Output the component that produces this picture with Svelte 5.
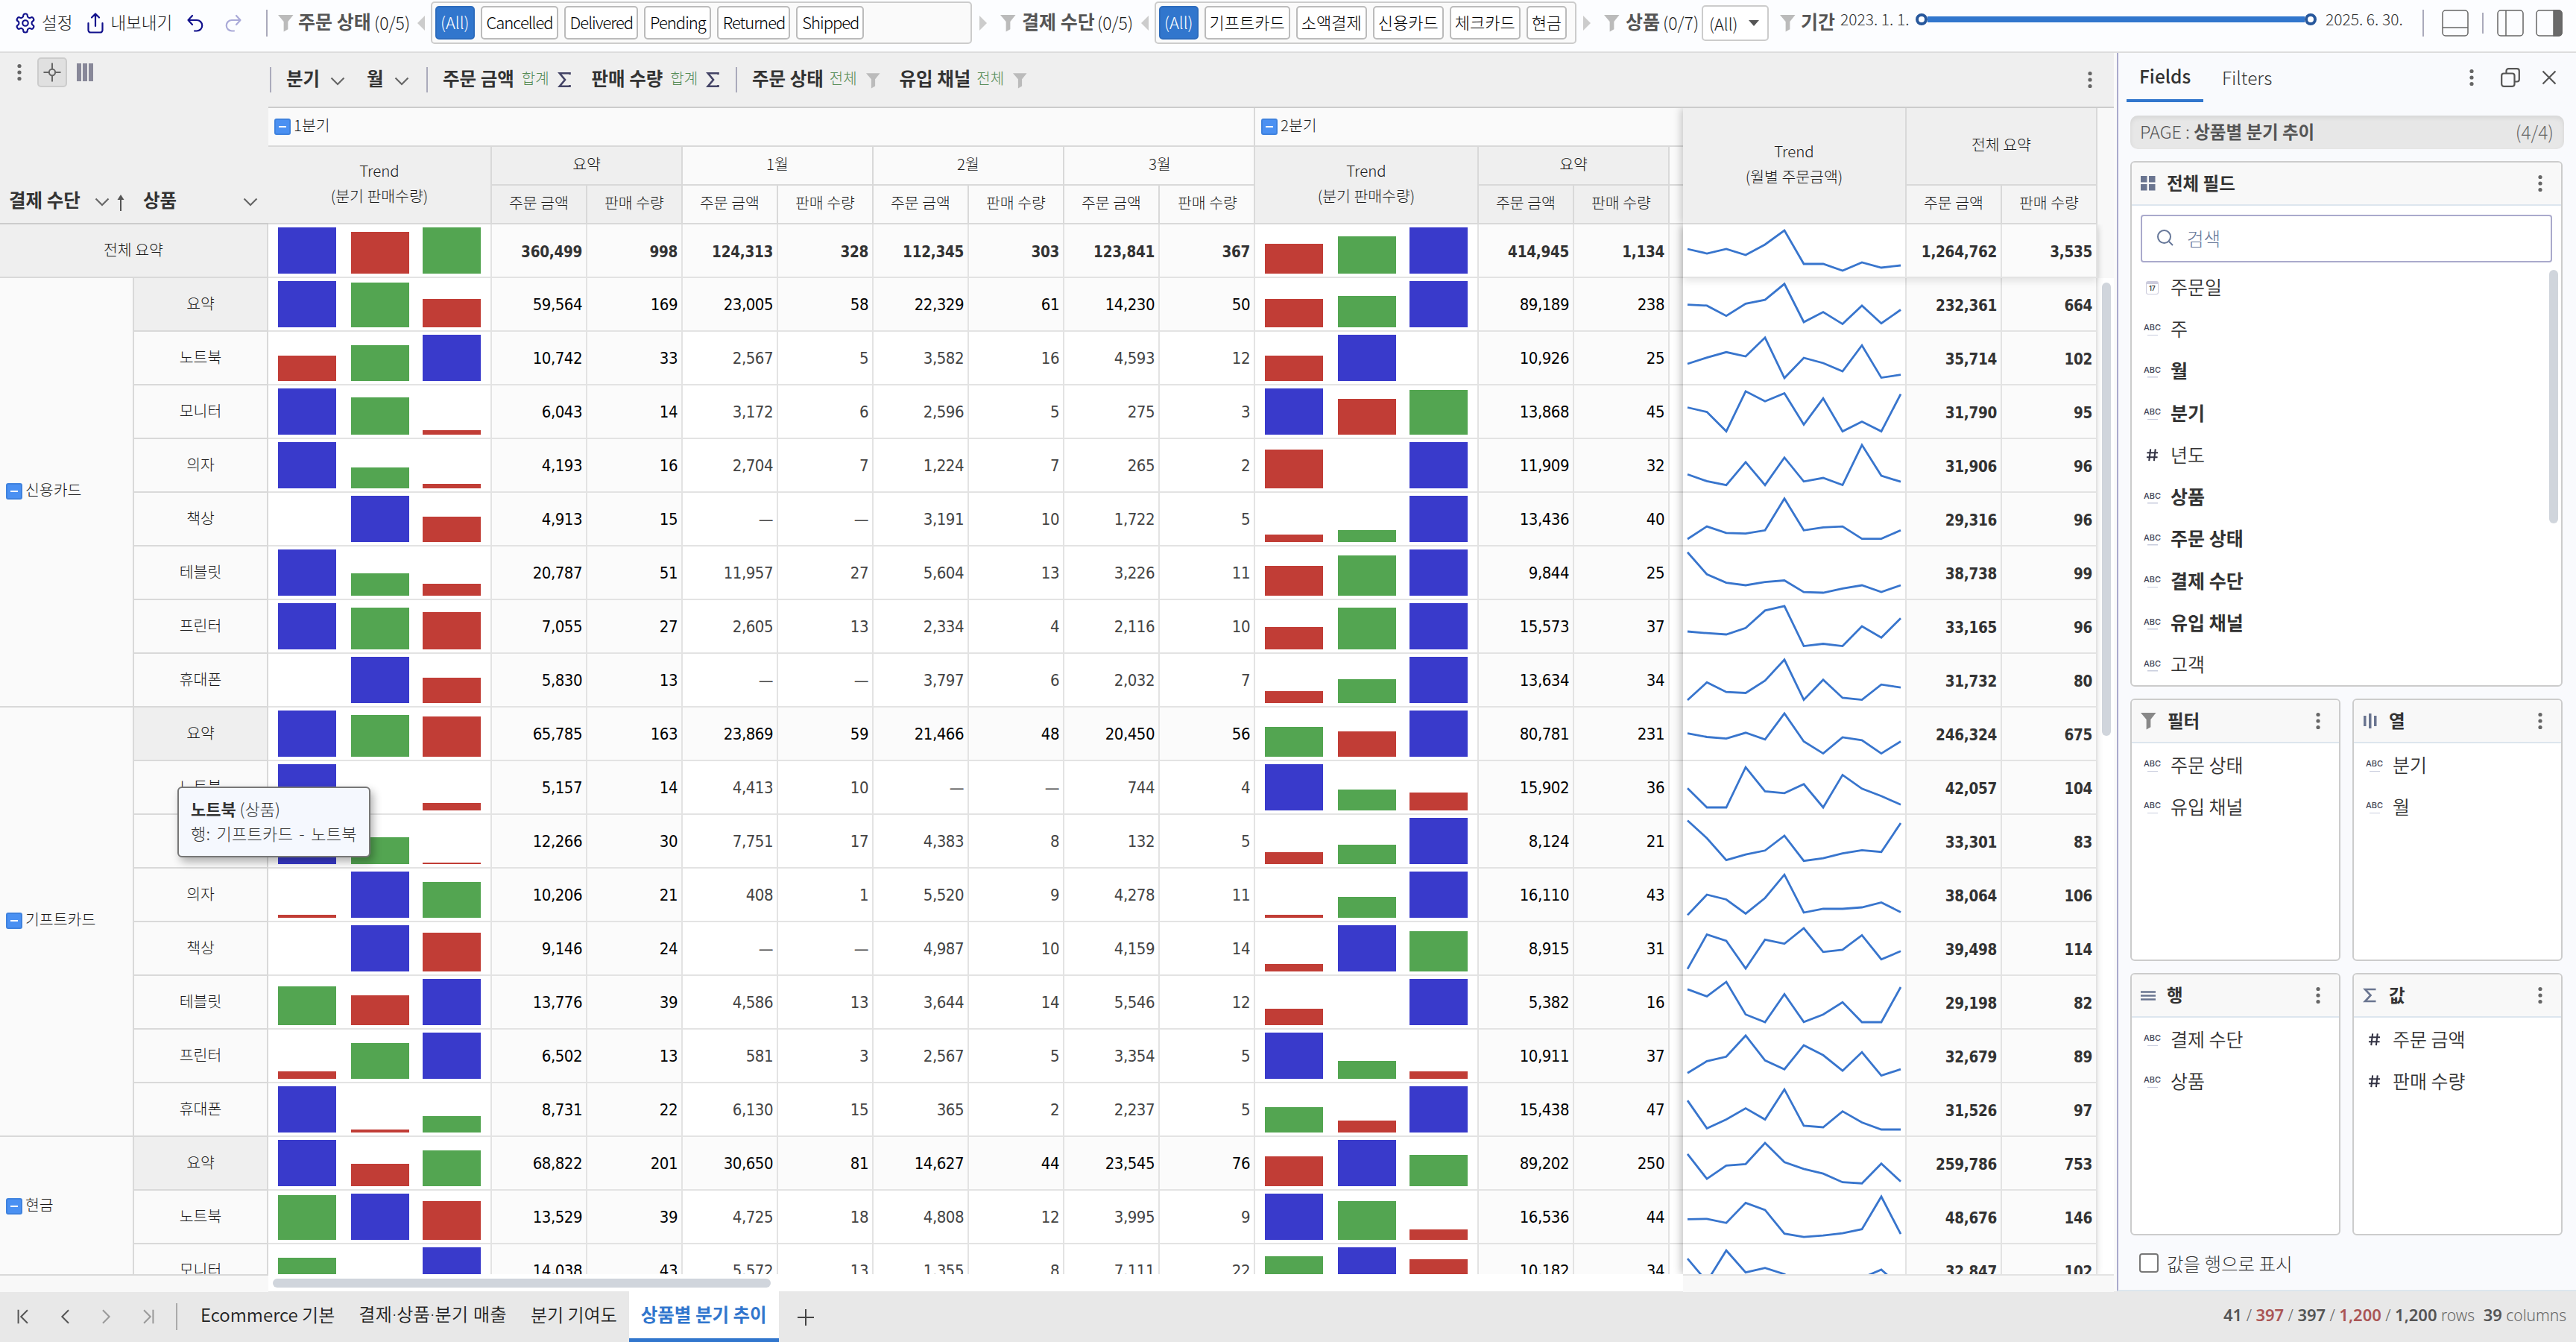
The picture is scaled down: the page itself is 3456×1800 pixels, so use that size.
<script lang="ts">
    type Cell = number | null;

    interface Row {
        name: string;
        summary?: boolean;
        total?: boolean;
        q1: [number, number];
        months: [Cell, Cell][];
        q2: [number, number];
        q2Trend: Cell[];
        line: number[];
        all: [number, number];
    }

    const statuses = ['Cancelled', 'Delivered', 'Pending', 'Returned', 'Shipped'];
    const payments = ['기프트카드', '소액결제', '신용카드', '체크카드', '현금'];

    const grandTotal: Row = {
        name: '전체 요약', total: true, q1: [360499, 998],
        months: [[124313, 328], [112345, 303], [123841, 367]],
        q2: [414945, 1134], q2Trend: [40, 50, 62],
        line: [33, 39, 33, 41, 27, 8, 53, 53, 62, 51, 58, 55], all: [1264762, 3535]
    };

    const groups: { name: string; rows: Row[] }[] = [
        {
            name: '신용카드',
            rows: [
                { name: '요약', summary: true, q1: [59564, 169], months: [[23005, 58], [22329, 61], [14230, 50]], q2: [89189, 238], q2Trend: [38, 42, 62], line: [35.6, 36.9, 50.7, 34.3, 29.1, 7.8, 59, 45.5, 61.6, 36.9, 60.7, 42.5], all: [232361, 664] },
                { name: '노트북', q1: [10742, 33], months: [[2567, 5], [3582, 16], [4593, 12]], q2: [10926, 25], q2Trend: [34, 62, null], line: [43, 34.7, 27.3, 33, 7.8, 62, 35, 42, 53, 18.2, 61.6, 57.7], all: [35714, 102] },
                { name: '모니터', q1: [6043, 14], months: [[3172, 6], [2596, 5], [275, 3]], q2: [13868, 45], q2Trend: [62, 48, 60], line: [29.5, 35.6, 61.6, 7.8, 21.2, 10.4, 52.5, 17.3, 61.6, 48.6, 61.6, 11.7], all: [31790, 95] },
                { name: '의자', q1: [4193, 16], months: [[2704, 7], [1224, 7], [265, 2]], q2: [11909, 32], q2Trend: [52, null, 62], line: [47.3, 56.4, 61.6, 30.8, 61.6, 24.7, 56.8, 52, 61.6, 7.8, 49, 57.2], all: [31906, 96] },
                { name: '책상', q1: [4913, 15], months: [[null, null], [3191, 10], [1722, 5]], q2: [13436, 40], q2Trend: [10, 16, 62], line: [62, 45.1, 53.8, 54.6, 50.3, 7.8, 50.3, 46.4, 45.1, 61.6, 61.6, 50.3], all: [29316, 96] },
                { name: '테블릿', q1: [20787, 51], months: [[11957, 27], [5604, 13], [3226, 11]], q2: [9844, 25], q2Trend: [40, 54, 62], line: [7.8, 37.3, 48.6, 52, 47.7, 45.5, 61.1, 62, 56.4, 52, 61.1, 52], all: [38738, 99] },
                { name: '프린터', q1: [7055, 27], months: [[2605, 13], [2334, 4], [2116, 10]], q2: [15573, 37], q2Trend: [30, 56, 62], line: [42, 44.2, 46, 37.3, 13.9, 7.8, 61.6, 58.5, 61.6, 35.1, 50.3, 24.3], all: [33165, 96] },
                { name: '휴대폰', q1: [5830, 13], months: [[null, null], [3797, 6], [2032, 7]], q2: [13634, 34], q2Trend: [16, 32, 62], line: [62, 38.2, 51.2, 52.5, 36, 7.8, 61.6, 34.7, 59, 61.6, 41.2, 45.1], all: [31732, 80] }
            ]
        },
        {
            name: '기프트카드',
            rows: [
                { name: '요약', summary: true, q1: [65785, 163], months: [[23869, 59], [21466, 48], [20450, 56]], q2: [80781, 231], q2Trend: [40, 34, 62], line: [34.7, 39.5, 41.6, 33.8, 42.9, 8, 45.5, 61.6, 39.9, 43.8, 61.6, 45.5], all: [246324, 675] },
                { name: '노트북', q1: [5157, 14], months: [[4413, 10], [null, null], [744, 4]], q2: [15902, 36], q2Trend: [62, 28, 24], line: [36.3, 62, 62, 8, 40.3, 42.8, 30.8, 62, 18.4, 36.8, 46.8, 58.2], all: [42057, 104] },
                { name: '모니터', q1: [12266, 30], months: [[7751, 17], [4383, 8], [132, 5]], q2: [8124, 21], q2Trend: [16, 26, 62], line: [7.5, 31.3, 60.7, 53.2, 47.8, 27.9, 61.7, 58.2, 51.7, 47.3, 49.7, 11], all: [33301, 83] },
                { name: '의자', q1: [10206, 21], months: [[408, 1], [5520, 9], [4278, 11]], q2: [16110, 43], q2Trend: [4, 28, 62], line: [62.4, 35, 41.5, 60.4, 39.5, 8.2, 59, 54, 54, 52, 45.5, 58.4], all: [38064, 106] },
                { name: '책상', q1: [9146, 24], months: [[null, null], [4987, 10], [4159, 14]], q2: [8915, 31], q2Trend: [10, 62, 54], line: [62.6, 16.4, 24.9, 62, 23.4, 28.8, 8, 39.8, 36.8, 17.4, 49.7, 38.8], all: [39498, 114] },
                { name: '테블릿', q1: [13776, 39], months: [[4586, 13], [3644, 14], [5546, 12]], q2: [5382, 16], q2Trend: [22, null, 62], line: [17.9, 27.4, 8, 51.7, 62, 24.4, 61.7, 51.7, 35.3, 62, 62, 15], all: [29198, 82] },
                { name: '프린터', q1: [6502, 13], months: [[581, 3], [2567, 5], [3354, 5]], q2: [10911, 37], q2Trend: [62, 24, 10], line: [58.2, 42.3, 36.3, 8, 41.3, 53.2, 20.9, 34.3, 55.2, 30.3, 61.7, 53.2], all: [32679, 89] },
                { name: '휴대폰', q1: [8731, 22], months: [[6130, 15], [365, 2], [2237, 5]], q2: [15438, 47], q2Trend: [34, 16, 62], line: [23.1, 60.4, 48.5, 33.6, 48.5, 8.2, 57, 59, 37.6, 52.5, 62, 62], all: [31526, 97] }
            ]
        },
        {
            name: '현금',
            rows: [
                { name: '요약', summary: true, q1: [68822, 201], months: [[30650, 81], [14627, 44], [23545, 76]], q2: [89202, 250], q2Trend: [40, 62, 42], line: [22.9, 56.2, 38.3, 36.3, 8, 33.8, 42.8, 49.2, 60.7, 62.2, 35.8, 59.7], all: [259786, 753] },
                { name: '노트북', q1: [13529, 39], months: [[4725, 18], [4808, 12], [3995, 9]], q2: [16536, 44], q2Trend: [62, 52, 14], line: [38.3, 37.8, 43.3, 16.4, 25.9, 57.7, 62.2, 60.2, 57.2, 51.7, 8, 58.2], all: [48676, 146] },
                { name: '모니터', q1: [14038, 43], months: [[5572, 13], [1355, 8], [7111, 22]], q2: [10182, 34], q2Trend: [50, 62, 46], line: [19.2, 50, 8.2, 37.6, 31.6, 40, 60, 62, 58, 45, 34, 57], all: [32847, 102] }
            ]
        }
    ];

    const rows = [grandTotal, ...groups.flatMap((g) => g.rows)];

    const fields = [
        { type: 'date', name: '주문일' },
        { type: 'abc', name: '주' },
        { type: 'abc', name: '월', used: true },
        { type: 'abc', name: '분기', used: true },
        { type: 'num', name: '년도' },
        { type: 'abc', name: '상품', used: true },
        { type: 'abc', name: '주문 상태', used: true },
        { type: 'abc', name: '결제 수단', used: true },
        { type: 'abc', name: '유입 채널', used: true },
        { type: 'abc', name: '고객' }
    ];

    const zones = [
        { icon: 'filter', name: '필터', type: 'abc', items: ['주문 상태', '유입 채널'] },
        { icon: 'cols', name: '열', type: 'abc', items: ['분기', '월'] },
        { icon: 'rows', name: '행', type: 'abc', items: ['결제 수단', '상품'] },
        { icon: 'sum', name: '값', type: 'num', items: ['주문 금액', '판매 수량'] }
    ];

    const pages = ['Ecommerce 기본', '결제·상품·분기 매출', '분기 기여도', '상품별 분기 추이'];

    function fmt(value: Cell) {
        return value === null ? '—' : value.toLocaleString('en-US');
    }

    // tallest bar fills 62px, heights snap to even pixels
    function bars(values: Cell[]) {
        const present = values.filter((v) => v !== null) as number[];
        const max = Math.max(...present);
        const min = Math.min(...present);
        return values.map((v) => {
            if (v === null) return { h: 0, tone: 'mid' };
            return {
                h: Math.round((v / max) * 31) * 2,
                tone: v === max ? 'max' : v === min ? 'min' : 'mid'
            };
        });
    }

    function points(line: number[]) {
        return line.map((y, i) => `${6 + i * 26},${y}`).join(' ');
    }
</script>

{#snippet funnel(cls)}
    <svg class="funnel {cls}" viewBox="0 0 22 24"><path d="M0 0h21.5L14 9.500V20l-6 3.500V9.500z" /></svg>
{/snippet}

{#snippet dots()}
    <svg class="dots" viewBox="0 0 6 24"><circle cx="3" cy="3.500" r="2.600" /><circle cx="3" cy="12" r="2.600" /><circle cx="3" cy="20.500" r="2.600" /></svg>
{/snippet}

{#snippet chevron()}
    <svg class="chevron" viewBox="0 0 20 12"><path d="M1.500 1.500 10 10l8.500-8.500" /></svg>
{/snippet}

{#snippet sigma()}
    <svg class="sigma" viewBox="0 0 17 20"><path d="M15.500 3V1.300H1.800L9 10l-7.200 8.700h13.700V17" /></svg>
{/snippet}

{#snippet fieldIcon(type)}
    {#if type === 'abc'}
        <span class="abc">ABC</span>
    {:else if type === 'num'}
        <svg class="hash" viewBox="0 0 18 20"><path d="M6.500 1.500 4.500 18M13.500 1.500l-2 16.500M1.500 6.500h15.500M1 13h15.500" /></svg>
    {:else}
        <span class="cal">17</span>
    {/if}
{/snippet}

{#snippet trendBars(values)}
    <div class="cell trend">
        {#each bars(values) as bar}
            <i class="bar {bar.tone}" style="height: {bar.h}px"></i>
        {/each}
    </div>
{/snippet}

<div class="app">
    <header class="toolbar">
        <div class="tools">
            <svg class="gear" viewBox="0 0 24 24"><path d="M12.220 2h-.440a2 2 0 0 0-2 2v.180a2 2 0 0 1-1 1.730l-.430.250a2 2 0 0 1-2 0l-.150-.080a2 2 0 0 0-2.730.730l-.220.380a2 2 0 0 0 .730 2.730l.150.100a2 2 0 0 1 1 1.720v.510a2 2 0 0 1-1 1.740l-.150.090a2 2 0 0 0-.730 2.730l.220.380a2 2 0 0 0 2.730.730l.150-.080a2 2 0 0 1 2 0l.430.250a2 2 0 0 1 1 1.730V20a2 2 0 0 0 2 2h.440a2 2 0 0 0 2-2v-.180a2 2 0 0 1 1-1.730l.430-.250a2 2 0 0 1 2 0l.150.080a2 2 0 0 0 2.730-.730l.220-.390a2 2 0 0 0-.730-2.730l-.150-.080a2 2 0 0 1-1-1.740v-.500a2 2 0 0 1 1-1.740l.150-.090a2 2 0 0 0 .730-2.730l-.220-.380a2 2 0 0 0-2.730-.730l-.150.080a2 2 0 0 1-2 0l-.430-.250a2 2 0 0 1-1-1.730V4a2 2 0 0 0-2-2z" /><circle cx="12" cy="12" r="3" /></svg>
            <span class="tool-label">설정</span>
            <svg class="export" viewBox="0 0 22 28"><path d="M1.500 14v9.500a3 3 0 0 0 3 3h13a3 3 0 0 0 3-3V14M11 18V2M6 6.500 11 1.500l5 5" /></svg>
            <span class="tool-label">내보내기</span>
            <svg class="undo" viewBox="0 0 22 24"><path d="M7 2 1.500 8 7 14M1.500 8H13a7 7 0 0 1 0 14.500h-3" /></svg>
            <svg class="undo redo" viewBox="0 0 22 24"><path d="M15 2l5.500 6-5.500 6M20.500 8H9a7 7 0 0 0 0 14.500h3" /></svg>
        </div>

        <div class="slicer status">
            {@render funnel('')}
            <b>주문 상태</b><span class="count">(0/5)</span>
            <i class="arrow left"></i>
            <div class="chips"><span class="chip on">(All)</span>{#each statuses as s}<span class="chip">{s}</span>{/each}</div>
            <i class="arrow right"></i>
        </div>
        <div class="slicer payment">
            {@render funnel('')}
            <b>결제 수단</b><span class="count">(0/5)</span>
            <i class="arrow left"></i>
            <div class="chips"><span class="chip on">(All)</span>{#each payments as p}<span class="chip">{p}</span>{/each}</div>
            <i class="arrow right"></i>
        </div>
        <div class="slicer product">
            {@render funnel('')}
            <b>상품</b><span class="count">(0/7)</span>
            <div class="select">(All)<i></i></div>
        </div>
        <div class="slicer period">
            {@render funnel('')}
            <b>기간</b><span class="date">2023. 1. 1.</span>
            <div class="range"><i class="knob"></i><i class="track"></i><i class="knob"></i></div>
            <span class="date">2025. 6. 30.</span>
        </div>
        <div class="views">
            <svg class="view" viewBox="0 0 36 36"><rect x="1" y="1" width="34" height="34" rx="4" /><path d="M1 24h34" /></svg>
            <i class="sep"></i>
            <svg class="view" viewBox="0 0 36 36"><rect x="1" y="1" width="34" height="34" rx="4" /><path d="M12 1v34" /></svg>
            <svg class="view" viewBox="0 0 36 36"><rect x="1" y="1" width="34" height="34" rx="4" /><path class="solid" d="M24 1h7a4 4 0 0 1 4 4v26a4 4 0 0 1-4 4h-7z" /></svg>
        </div>
    </header>

    <main>
        <section class="pivot">
            <div class="head">
                <div class="corner">
                    <div class="corner-tools">
                        {@render dots()}
                        <span class="target"><svg viewBox="0 0 26 28"><circle cx="13" cy="14" r="4.500" /><path d="M13 .500v9M13 18.500v9M.500 14H8.500M17.500 14h8" /></svg></span>
                        <span class="stripes"><i></i><i></i><i></i></span>
                    </div>
                    <div class="corner-fields">
                        <b class="pay">결제 수단</b>
                        {@render chevron()}
                        <svg class="sort" viewBox="0 0 10 24"><path d="M5 23V4" /><path class="tip" d="M.500 8 5 1l4.500 7z" /></svg>
                        <b class="prod">상품</b>
                        {@render chevron()}
                    </div>
                </div>
                <div class="head-right">
                    <div class="field-bar">
                        <div class="fgroup g-cols">
                            <b>분기</b>{@render chevron()}
                            <b>월</b>{@render chevron()}
                        </div>
                        <div class="fgroup g-vals">
                            <b>주문 금액</b><em>합계</em>{@render sigma()}
                            <b>판매 수량</b><em>합계</em>{@render sigma()}
                        </div>
                        <div class="fgroup g-filters">
                            <b>주문 상태</b><em>전체</em>{@render funnel('small')}
                            <b>유입 채널</b><em>전체</em>{@render funnel('small')}
                        </div>
                        {@render dots()}
                    </div>
                    <div class="col-heads">
                        <div class="quarters">
                            <div class="quarter">
                                <div class="qname"><i class="toggle"></i>1분기</div>
                                <div class="qbody">
                                    <div class="th shade trend-head">Trend<br />(분기 판매수량)</div>
                                    {#each ['요약', '1월', '2월', '3월'] as m, i}
                                        <div class="pair" class:shade={i === 0}>
                                            <div class="th">{m}</div>
                                            <div class="sub"><div class="th">주문 금액</div><div class="th">판매 수량</div></div>
                                        </div>
                                    {/each}
                                </div>
                            </div>
                            <div class="quarter">
                                <div class="qname"><i class="toggle"></i>2분기</div>
                                <div class="qbody">
                                    <div class="th shade trend-head">Trend<br />(분기 판매수량)</div>
                                    <div class="pair shade">
                                        <div class="th">요약</div>
                                        <div class="sub"><div class="th">주문 금액</div><div class="th">판매 수량</div></div>
                                    </div>
                                    <div class="pair"><div class="th"></div><div class="sub"><div class="th"></div></div></div>
                                </div>
                            </div>
                        </div>
                        <div class="pane-head">
                            <div class="th shade pane-trend">Trend<br />(월별 주문금액)</div>
                            <div class="pair total-pair">
                                <div class="th shade">전체 요약</div>
                                <div class="sub"><div class="th">주문 금액</div><div class="th">판매 수량</div></div>
                            </div>
                        </div>
                        <div class="gutter"></div>
                    </div>
                </div>
            </div>

            <div class="body">
                <div class="row-heads">
                    <div class="rh total-head">전체 요약</div>
                    {#each groups as g}
                        <div class="group">
                            <div class="gname"><i class="toggle"></i><span>{g.name}</span></div>
                            <div class="gitems">
                                {#each g.rows as r}
                                    <div class="rh" class:shade={r.summary}>{r.name}</div>
                                {/each}
                            </div>
                        </div>
                    {/each}
                </div>
                <div class="cells">
                    {#each rows as r}
                        <div class="row" class:summary={r.summary} class:total={r.total}>
                            {@render trendBars(r.months.map((m) => m[0]))}
                            <div class="cell sum">{fmt(r.q1[0])}</div>
                            <div class="cell sum">{fmt(r.q1[1])}</div>
                            {#each r.months as m}
                                <div class="cell">{fmt(m[0])}</div>
                                <div class="cell">{fmt(m[1])}</div>
                            {/each}
                            {@render trendBars(r.q2Trend)}
                            <div class="cell sum">{fmt(r.q2[0])}</div>
                            <div class="cell sum">{fmt(r.q2[1])}</div>
                            <div class="cell"></div>
                        </div>
                    {/each}
                </div>
                <div class="pane">
                    {#each rows as r}
                        <div class="row" class:total={r.total}>
                            <div class="cell spark"><svg viewBox="0 0 298 70"><polyline points={points(r.line)} /></svg></div>
                            <div class="cell sum">{fmt(r.all[0])}</div>
                            <div class="cell sum">{fmt(r.all[1])}</div>
                        </div>
                    {/each}
                </div>
                <div class="vscroll"><i></i></div>
            </div>

            <div class="foot">
                <div class="foot-left"></div>
                <div class="hscroll"><i></i></div>
                <div class="foot-right"></div>
            </div>

            <div class="tooltip"><div><b>노트북</b> (상품)</div><div class="path">행: 기프트카드 - 노트북</div></div>
        </section>

        <aside class="panel">
            <div class="panel-tabs">
                <span class="ptab on">Fields</span>
                <span class="ptab">Filters</span>
                {@render dots()}
                <svg class="copy" viewBox="0 0 26 26"><rect x="1.200" y="7.500" width="17.300" height="17.300" rx="3" /><path d="M7.500 7.500V4.200a3 3 0 0 1 3-3h11.300a3 3 0 0 1 3 3v11.300a3 3 0 0 1-3 3h-3.300" /></svg>
                <svg class="close" viewBox="0 0 20 20"><path d="M1.500 1.500l17 17M18.500 1.500l-17 17" /></svg>
            </div>
            <div class="page-bar"><span>PAGE : <b>상품별 분기 추이</b></span><span class="pcount">(4/4)</span></div>
            <div class="box all-fields">
                <div class="box-head">
                    <svg class="zicon" viewBox="0 0 20 20"><path class="fill" d="M0 0h8.500v8.500H0zM11 0h8.500v8.500H11zM0 11h8.500v8.500H0zM11 11h8.500v8.500H11z" /></svg>
                    <b>전체 필드</b>
                    {@render dots()}
                </div>
                <div class="search">
                    <svg viewBox="0 0 24 24"><circle cx="10.500" cy="10.500" r="8.500" /><path d="M17 17l5 5" /></svg>
                    검색
                </div>
                <div class="field-list">
                    <div class="items">
                        {#each fields as f}
                            <div class="item" class:used={f.used}>{@render fieldIcon(f.type)}<span>{f.name}</span></div>
                        {/each}
                    </div>
                    <i class="list-thumb"></i>
                </div>
            </div>
            <div class="zones">
                {#each zones as z}
                    <div class="box">
                        <div class="box-head">
                            {#if z.icon === 'filter'}
                                {@render funnel('dark')}
                            {:else if z.icon === 'cols'}
                                <svg class="zicon" viewBox="0 0 20 20"><path class="fill" d="M1 3h3.500v14H1zM8 0h3.500v20H8zM15 3h3.500v14H15z" /></svg>
                            {:else if z.icon === 'rows'}
                                <svg class="zicon" viewBox="0 0 22 20"><path d="M0 5h22M0 10.500h22M0 16h22" /></svg>
                            {:else}
                                <svg class="zicon" viewBox="0 0 18 20"><path d="M16.500 2H2l7.500 8L2 18h14.500" /></svg>
                            {/if}
                            <b>{z.name}</b>
                            {@render dots()}
                        </div>
                        <div class="items">
                            {#each z.items as item}
                                <div class="item">{@render fieldIcon(z.type)}<span>{item}</span></div>
                            {/each}
                        </div>
                    </div>
                {/each}
            </div>
            <div class="check"><i></i>값을 행으로 표시</div>
        </aside>
    </main>

    <footer class="pages">
        <div class="nav">
            <svg viewBox="0 0 18 24"><path d="M2 2v20M15.500 2.500 6 12l9.500 9.500" /></svg>
            <svg viewBox="0 0 18 24"><path d="M14.500 2.500 5 12l9.500 9.500" /></svg>
            <svg class="off" viewBox="0 0 18 24"><path d="M3.500 2.500 13 12l-9.500 9.500" /></svg>
            <svg class="off" viewBox="0 0 18 24"><path d="M2.500 2.500 12 12l-9.500 9.500M16 2v20" /></svg>
        </div>
        <div class="tabs">
            {#each pages as p, i}
                <span class="tab" class:on={i === 3}>{p}</span>
            {/each}
            <svg class="plus" viewBox="0 0 22 22"><path d="M11 0v22M0 11h22" /></svg>
        </div>
        <div class="stats"><b>41</b> / <b class="red">397</b> / <b>397</b> / <b class="red">1,200</b> / <b>1,200</b> <span>rows</span> <b class="cnum">39</b> <span>columns</span></div>
    </footer>
</div>

<style>
    :global(body) {
        background: #fff;
    }

    .app {
        width: 3456px;
        height: 1800px;
        display: flex;
        flex-direction: column;
        overflow: hidden;
        font-family: "Noto Sans CJK KR", "Noto Sans", sans-serif;
        font-size: 22px;
        font-weight: 300;
        color: #1a1a1a;
        white-space: nowrap;
    }

    .app * {
        box-sizing: border-box;
    }

    svg {
        display: block;
        flex: none;
        fill: none;
        overflow: visible;
    }

    b {
        font-weight: 700;
    }

    em,
    i {
        font-style: normal;
        flex: none;
    }

    .funnel {
        width: 21px;
        height: 23px;
        fill: #bbb;
    }

    .funnel.small {
        width: 19px;
        height: 21px;
    }

    .funnel.dark {
        fill: #888;
    }

    .dots {
        width: 6px;
        height: 24px;
        fill: #666;
    }

    .chevron {
        width: 20px;
        height: 12px;
        stroke: #666;
        stroke-width: 2.2;
    }

    .sigma {
        width: 17px;
        height: 20px;
        stroke: #446;
        stroke-width: 2.6;
    }

    /* toolbar */
    .toolbar {
        height: 71px;
        flex: none;
        display: flex;
        align-items: flex-start;
        background: #fcfdff;
        border-bottom: 2px solid #ddd;
    }

    .tools {
        width: 359px;
        height: 36px;
        margin: 13px 14px 0 0;
        padding-left: 19px;
        display: flex;
        align-items: center;
        border-right: 2px solid #aab;
    }

    .gear {
        width: 30px;
        height: 30px;
        stroke: #11118c;
        stroke-width: 1.7;
    }

    .tool-label {
        margin: -4px 20px 0 7px;
        font-size: 22.5px;
    }

    .export,
    .undo {
        width: 22px;
        height: 28px;
        stroke: #11118c;
        stroke-width: 2.2;
        stroke-linecap: round;
        stroke-linejoin: round;
    }

    .export + .tool-label {
        margin-left: 9px;
    }

    .undo {
        height: 24px;
    }

    .redo {
        margin-left: 29px;
        stroke: #aaaad8;
    }

    .slicer {
        display: grid;
        align-items: center;
        height: 61px;
    }

    .slicer b {
        font-size: 25px;
        color: #555;
        margin-top: -6px;
    }

    .slicer .funnel {
        margin-top: 2px;
    }

    .count {
        font-size: 23px;
        margin-top: -2px;
    }

    .status {
        width: 969px;
        grid-template-columns: 27px 102px 58px 18px 736px 28px;
    }

    .payment {
        width: 810px;
        grid-template-columns: 29px 101px 59px 18px 575px 28px;
    }

    .product {
        width: 236px;
        grid-template-columns: 29px 50px 52px 90px;
    }

    .period {
        width: 862px;
        grid-template-columns: 28px 53px 101px 550px auto;
    }

    .arrow {
        width: 0;
        height: 0;
        border: 10px solid transparent;
    }

    .arrow.left {
        border-left: 0;
        border-right-color: #ccc;
    }

    .arrow.right {
        border-right: 0;
        border-left-color: #ccc;
    }

    .chips {
        width: 726px;
        height: 57px;
        padding: 4px;
        display: flex;
        gap: 8px;
        background: #fafafa;
        border: 2px solid #ccc;
        border-radius: 5px;
    }

    .payment .chips {
        width: 566px;
    }

    .chip {
        height: 45px;
        padding: 0 5px;
        line-height: 38px;
        color: #000;
        background: #fff;
        border: 2px solid #bbb;
        border-radius: 5px;
        font-size: 22px;
    }

    .status .chip:not(.on) {
        letter-spacing: -1px;
        padding-left: 6px;
    }

    .chip.on {
        background: #3176cd;
        border-color: #2d6cbd;
        color: #fff;
    }

    .select {
        width: 90px;
        height: 48px;
        padding: 0 11px 0 8px;
        display: flex;
        align-items: center;
        justify-content: space-between;
        background: #fff;
        border: 2px solid #ccc;
        border-radius: 5px;
    }

    .select i {
        border: 7px solid transparent;
        border-top: 8px solid #555;
        border-bottom: 0;
    }

    .date {
        font-size: 21px;
        margin-top: -12px;
        color: #333;
    }

    .range {
        width: 538px;
        display: flex;
        align-items: center;
        margin-top: -9px;
    }

    .knob {
        width: 16px;
        height: 16px;
        border: 4px solid #28589c;
        border-radius: 50%;
        background: #fff;
    }

    .track {
        flex: 1;
        height: 8px;
        background: #3176cd;
    }

    .views {
        height: 36px;
        margin-top: 13px;
        padding-left: 24px;
        display: flex;
        align-items: center;
        gap: 18px;
        border-left: 2px solid #aab;
    }

    .view {
        width: 36px;
        height: 36px;
        stroke: #666;
        stroke-width: 1.5;
    }

    .view:last-child {
        margin-left: -2px;
    }

    .view .solid {
        fill: #6a6a6a;
    }

    .sep {
        width: 2px;
        height: 28px;
        background: #aab;
    }

    main {
        height: 1661px;
        flex: none;
        display: flex;
        background: #fafafa;
    }

    /* pivot grid */
    .pivot {
        width: 2836px;
        position: relative;
        display: flex;
        flex-direction: column;
        background: #fff;
    }

    .head {
        height: 230px;
        flex: none;
        display: flex;
        background: #efefef;
    }

    .corner {
        width: 360px;
        display: flex;
        flex-direction: column;
        justify-content: space-between;
        border-bottom: 2px solid #ccc;
        padding-top: 6px;
    }

    .corner-tools {
        display: flex;
        align-items: center;
        padding-left: 23px;
    }

    .target {
        width: 40px;
        height: 40px;
        margin: 0 13px 0 21px;
        padding: 4px 6px;
        background: #e0e0e0;
        border: 2px solid #ccc;
        border-radius: 5px;
    }

    .target svg {
        width: 24px;
        height: 28px;
        stroke: #666;
        stroke-width: 2.2;
    }

    .stripes {
        display: flex;
        gap: 2px;
    }

    .stripes i {
        width: 6px;
        height: 24px;
        background: #889;
    }

    .corner-fields {
        display: flex;
        align-items: center;
        height: 52px;
        margin-bottom: 6px;
        padding-left: 12px;
        font-size: 24.5px;
        color: #333;
    }

    .corner-fields .chevron {
        margin-top: 8px;
    }

    .pay {
        width: 115px;
    }

    .sort {
        width: 10px;
        height: 24px;
        margin: 9px 25px 0 10px;
        stroke: #555;
        stroke-width: 2;
    }

    .sort .tip {
        fill: #555;
        stroke: none;
    }

    .prod {
        width: 134px;
    }

    .head-right {
        width: 2476px;
        display: flex;
        flex-direction: column;
    }

    .field-bar {
        height: 74px;
        display: flex;
        align-items: center;
        border-bottom: 2px solid #ccc;
    }

    .fgroup {
        height: 34px;
        margin-top: -1px;
        display: flex;
        align-items: center;
        border-left: 2px solid #aab;
        padding-left: 20px;
        font-size: 24.5px;
        color: #333;
    }

    .fgroup b {
        margin-top: -5px;
    }

    .fgroup em {
        margin: -4px 12px 0 8px;
        font-size: 20px;
        color: #558b55;
    }

    .g-cols {
        width: 210px;
        margin-left: 2px;
    }

    .g-cols .chevron {
        margin: 4px 29px 0 14px;
    }

    .g-vals {
        width: 415px;
    }

    .g-vals em {
        margin-left: 10px;
    }

    .g-vals .sigma {
        margin-right: 28px;
    }

    .g-filters {
        width: 1814px;
    }

    .g-filters .funnel {
        margin-right: 26px;
        margin-top: 3px;
    }

    .col-heads {
        height: 156px;
        display: flex;
    }

    .quarters {
        width: 1898px;
        display: flex;
        overflow: hidden;
        font-size: 20.5px;
    }

    .quarter {
        width: 1324px;
        flex: none;
        background: #fafafa;
        border-right: 2px solid #d9d9d9;
        border-left: 2px solid #ccc;
        margin-left: -2px;
    }

    .quarter + .quarter {
        border-left: 0;
        margin-left: 0;
    }

    .quarter:first-child {
        width: 1326px;
    }

    .qname {
        height: 52px;
        display: flex;
        align-items: center;
        gap: 4px;
        padding: 0 0 6px 8px;
        border-bottom: 2px solid #d9d9d9;
    }

    .toggle {
        width: 22px;
        height: 22px;
        background: linear-gradient(#fff, #fff) center / 10px 2px no-repeat #4a90f2;
        border: 2px solid #3f82de;
        border-radius: 3px;
        position: relative;
        top: 3px;
    }

    .qbody {
        display: flex;
    }

    .th {
        display: flex;
        align-items: center;
        justify-content: center;
        text-align: center;
        border-right: 2px solid #d9d9d9;
        border-bottom: 2px solid #d9d9d9;
        padding-bottom: 6px;
        line-height: 34px;
        font-size: 20.5px;
    }

    .shade {
        background: #efefef;
    }

    .trend-head {
        width: 300px;
        height: 104px;
        flex: none;
    }

    .pair {
        width: 256px;
        flex: none;
    }

    .pair .th {
        height: 52px;
    }

    .sub {
        display: flex;
    }

    .sub .th {
        width: 128px;
    }

    .quarter:first-child .pair:last-child .th,
    .quarter:first-child .pair:last-child .sub .th:last-child {
        border-right: 0;
    }

    .quarter:first-child .pair:last-child .sub .th:first-child {
        border-right: 2px solid #d9d9d9;
    }

    .pane-head {
        width: 556px;
        display: flex;
        box-shadow: -3px 0 10px rgba(0, 0, 0, 0.2);
        clip-path: inset(0 0 0 -20px);
    }

    .pane-trend {
        width: 300px;
    }

    .total-pair .th {
        height: 104px;
    }

    .total-pair .sub .th {
        height: 52px;
        background: #f4f4f4;
    }

    .gutter {
        flex: 1;
        background: #f8f8f8;
    }

    .body {
        height: 1408px;
        flex: none;
        display: flex;
        overflow: hidden;
    }

    .row-heads {
        width: 360px;
        flex: none;
        background: #fafafa;
        font-size: 20.5px;
        display: flex;
        flex-direction: column;
    }

    .rh {
        height: 72px;
        flex: none;
        display: flex;
        align-items: center;
        justify-content: center;
        padding-bottom: 5px;
        border-right: 2px solid #d9d9d9;
        border-bottom: 2px solid #d9d9d9;
    }

    .total-head {
        background: #efefef;
    }

    .group {
        display: flex;
        flex: none;
    }

    .group:last-child {
        height: 184px;
        overflow: hidden;
    }

    .gname {
        width: 180px;
        display: flex;
        align-items: center;
        gap: 4px;
        padding: 0 0 8px 8px;
        border-right: 2px solid #d9d9d9;
        border-bottom: 2px solid #d9d9d9;
    }

    .group:last-child .gname {
        padding-bottom: 5px;
        border-bottom: 0;
    }

    .gitems {
        width: 180px;
    }

    .cells {
        width: 1898px;
        flex: none;
        overflow: hidden;
    }

    .row {
        height: 72px;
        display: flex;
    }

    .cell {
        width: 128px;
        height: 72px;
        flex: none;
        display: flex;
        align-items: center;
        justify-content: flex-end;
        padding: 1px 5px 0 0;
        border-right: 2px solid #e3e3e3;
        border-bottom: 2px solid #e3e3e3;
        font-family: "DejaVu Sans Condensed", "DejaVu Sans", sans-serif;
        font-stretch: condensed;
        font-weight: 400;
        font-size: 22px;
        letter-spacing: -0.5px;
        color: #444;
    }

    .sum,
    .summary .cell,
    .total .cell {
        background: #fbfbfb;
        color: #000;
    }

    .total .cell,
    .pane .sum {
        padding-top: 3px;
        font-weight: 700;
        font-size: 20.5px;
        letter-spacing: -0.3px;
        color: #333;
    }

    .row .trend,
    .row .spark {
        width: 300px;
        background: #fff;
    }

    .row .trend {
        align-items: flex-end;
        justify-content: flex-start;
        padding: 0 0 4px 13px;
    }

    .bar {
        width: 78px;
        margin-right: 20px;
    }

    .bar + .bar {
        margin-right: 18px;
    }

    .max {
        background: #393acb;
    }

    .mid {
        background: #53a551;
    }

    .min {
        background: #c13d36;
    }

    .pane {
        width: 556px;
        flex: none;
        z-index: 1;
        background: #fff;
        box-shadow: -3px 0 10px rgba(0, 0, 0, 0.24);
    }

    .pane .total {
        position: relative;
        box-shadow: 0 4px 10px rgba(0, 0, 0, 0.1);
    }

    .pane .spark {
        padding: 0;
    }

    .spark svg {
        width: 298px;
        height: 70px;
        stroke: #3875cd;
        stroke-width: 2.8;
    }

    .vscroll {
        flex: 1;
        padding: 78px 0 0 6px;
        background: linear-gradient(#f8f8f8 72px, #fff 72px);
    }

    .vscroll i {
        display: block;
        width: 12px;
        height: 608px;
        border-radius: 6px;
        background: #d0d5dc;
    }

    .foot {
        flex: 1;
        display: flex;
    }

    .foot-left {
        width: 360px;
        background: #f8f8f8;
        border-top: 2px solid #d9d9d9;
    }

    .hscroll {
        width: 1898px;
        padding: 6px;
    }

    .hscroll i {
        display: block;
        width: 668px;
        height: 12px;
        border-radius: 6px;
        background: #d0d5dc;
    }

    .foot-right {
        flex: 1;
        background: #f8f8f8;
        border-top: 2px solid #e3e3e3;
    }

    .tooltip {
        position: absolute;
        left: 238px;
        top: 984px;
        width: 259px;
        height: 95px;
        z-index: 2;
        padding: 11px 16px;
        line-height: 33px;
        font-size: 22px;
        color: #333;
        background: #f5f8fe;
        border: 2px solid #777;
        border-radius: 6px;
        box-shadow: 4px 6px 12px rgba(0, 0, 0, 0.3);
    }

    .tooltip .path {
        word-spacing: 3px;
        letter-spacing: 0.3px;
    }

    /* side panel */
    .panel {
        width: 616px;
        margin-left: 4px;
        padding: 0 18px 0 16px;
        background: #f9fafd;
        border-left: 2px solid #aac;
        border-bottom: 2px solid #dde6ee;
        color: #333;
    }

    .panel-tabs {
        height: 66px;
        margin-left: -5px;
        display: flex;
        align-items: center;
    }

    .ptab {
        width: 103px;
        height: 66px;
        padding-left: 17px;
        line-height: 66px;
        font-size: 24.5px;
    }

    .ptab.on {
        font-weight: 500;
        line-height: 62px;
        border-bottom: 4px solid #3176cd;
    }

    .ptab + .ptab {
        width: 357px;
        padding-left: 25px;
    }

    .panel-tabs .dots {
        margin-right: 36px;
    }

    .copy {
        width: 26px;
        height: 26px;
        margin-right: 29px;
        stroke: #555;
        stroke-width: 2.2;
    }

    .close {
        width: 20px;
        height: 20px;
        stroke: #555;
        stroke-width: 2.2;
    }

    .page-bar {
        width: 582px;
        height: 45px;
        margin-top: 18px;
        padding: 0 14px 3px 13px;
        display: flex;
        align-items: center;
        justify-content: space-between;
        font-size: 23.5px;
        color: #555;
        background: #e7e7e7;
        border-radius: 10px;
        box-shadow: inset 0 3px 6px rgba(0, 0, 0, 0.08);
    }

    .pcount {
        color: #666;
        font-size: 24.5px;
    }

    .box {
        background: #fff;
        border: 2px solid #ccc;
        border-radius: 6px;
        overflow: hidden;
    }

    .all-fields {
        width: 580px;
        height: 705px;
        margin-top: 16px;
    }

    .box-head {
        height: 58px;
        display: flex;
        align-items: center;
        padding: 0 25px 0 12px;
        background: #f8f8f8;
        border-bottom: 2px solid #dde6ee;
        font-size: 23.5px;
    }

    .box-head b {
        flex: 1;
        padding: 0 0 3px 15px;
    }

    .zicon {
        width: 20px;
        height: 20px;
        stroke: #6a7590;
        stroke-width: 2.6;
    }

    .zicon .fill {
        fill: #6a7590;
        stroke: none;
    }

    .search {
        width: 552px;
        height: 64px;
        margin: 12px;
        padding: 0 0 2px 19px;
        display: flex;
        align-items: center;
        gap: 17px;
        font-size: 24.5px;
        color: #667799;
        border: 2px solid #aac;
        border-radius: 4px;
    }

    .search svg {
        width: 24px;
        height: 24px;
        stroke: #667799;
        stroke-width: 2;
    }

    .field-list {
        display: flex;
        justify-content: space-between;
        margin-top: -7px;
    }

    .item {
        height: 56.300px;
        display: flex;
        align-items: center;
        padding: 1px 0 0 14px;
        font-size: 25px;
        font-weight: 350;
    }

    .item span:last-child {
        padding: 0 0 4px 11px;
    }

    .item.used {
        font-weight: 700;
    }

    .item .abc {
        width: 27px;
        height: 17px;
        font: 500 11px/13px Inter, sans-serif;
        text-align: center;
        color: #445;
        background: linear-gradient(#c8ccdd, #c8ccdd) center bottom / 14px 1.500px no-repeat;
    }

    .hash {
        width: 17px;
        height: 19px;
        margin: 0 5px;
        stroke: #334;
        stroke-width: 2.2;
    }

    .item .cal {
        width: 17px;
        height: 18px;
        margin: 0 5px;
        font: 600 8.500px/12px Inter, sans-serif;
        text-align: center;
        border: 1px solid #ccd;
        border-top: 4px solid #ccd;
        border-radius: 3px;
    }

    .list-thumb {
        width: 12px;
        height: 340px;
        margin: 5px 4px 0 0;
        border-radius: 6px;
        background: #d0d5dc;
    }

    .zones {
        display: grid;
        grid-template-columns: 282px 282px;
        gap: 16px;
        margin-top: 16px;
    }

    .zones .box {
        height: 352px;
    }

    .zones .items {
        padding-top: 1px;
    }

    .check {
        display: flex;
        align-items: center;
        gap: 11px;
        height: 72px;
        padding: 2px 0 0 12px;
        font-size: 24.5px;
    }

    .check i {
        width: 26px;
        height: 26px;
        background: #fff;
        border: 2px solid #777;
        border-radius: 4px;
    }

    /* page tabs */
    .pages {
        height: 68px;
        display: flex;
        background: #e8e8e8;
    }

    .nav {
        width: 238px;
        height: 36px;
        margin-top: 16px;
        padding-left: 22px;
        display: flex;
        align-items: center;
        gap: 38px;
        border-right: 2px solid #aaa;
        stroke: #555;
        stroke-width: 2.2;
    }

    .nav svg {
        width: 18px;
        height: 22px;
    }

    .nav .off {
        stroke: #999;
    }

    .tabs {
        width: 2745px;
        padding-left: 15px;
        display: flex;
    }

    .tab {
        padding: 0 16px;
        line-height: 62px;
        font-size: 24px;
        font-weight: 350;
        color: #222;
    }

    .tab:nth-child(2) {
        font-family: "Open Sans", "Noto Sans CJK KR", sans-serif;
        letter-spacing: 0.4px;
    }

    .tab.on {
        background: #fff;
        font-size: 24.5px;
        font-weight: 600;
        color: #3176cd;
        border-bottom: 5px solid #3176cd;
    }

    .plus {
        width: 22px;
        height: 22px;
        margin: 24px 0 0 25px;
        stroke: #444;
        stroke-width: 2;
    }

    .stats {
        flex: 1;
        line-height: 62px;
        font-family: "Noto Sans", sans-serif;
        font-size: 21px;
        color: #666;
    }

    .stats b {
        font-size: 22px;
        font-weight: 600;
        color: #555;
    }

    .stats .red {
        color: #a55;
    }

    .cnum {
        margin-left: 6px;
    }
</style>
